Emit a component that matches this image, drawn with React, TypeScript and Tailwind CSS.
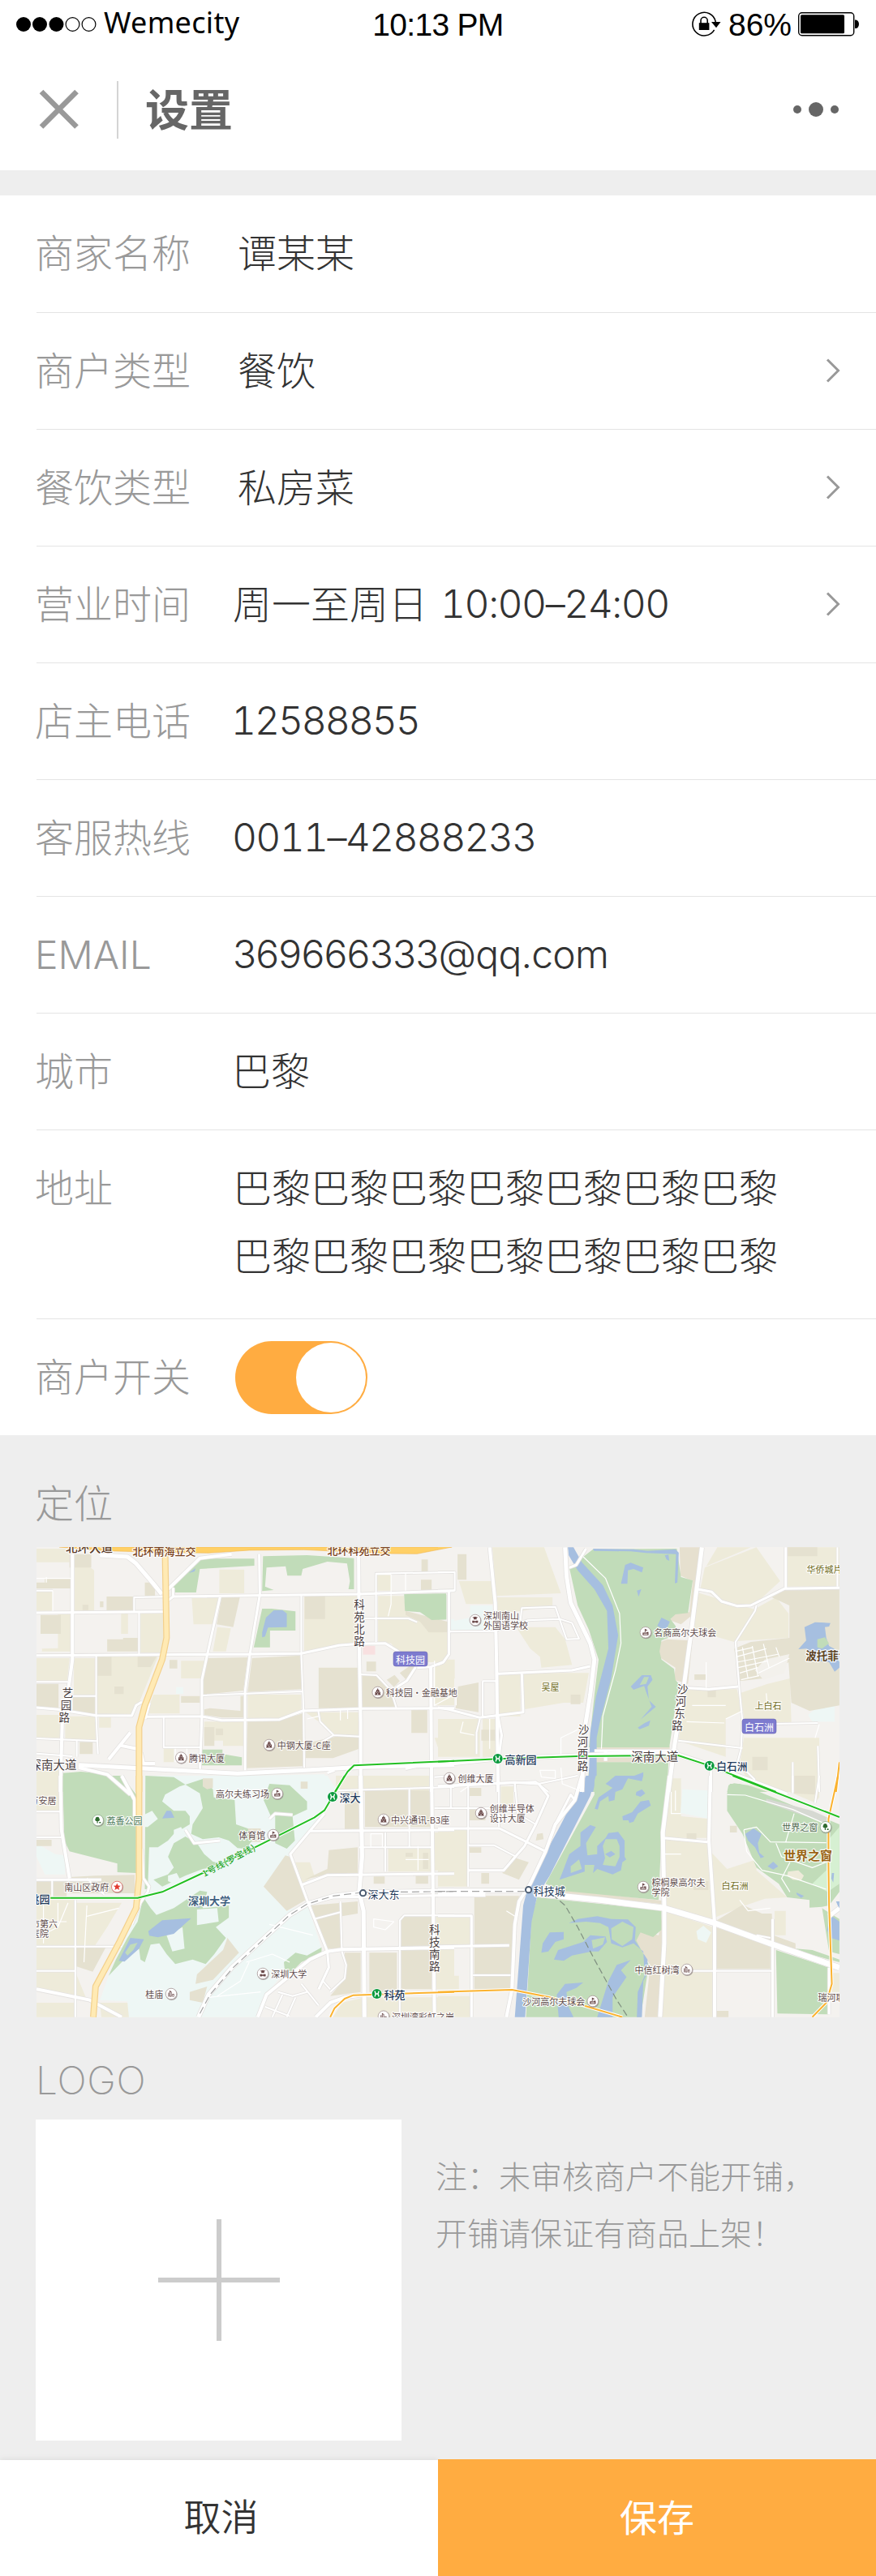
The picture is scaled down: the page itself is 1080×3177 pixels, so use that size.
import type { ReactNode } from "react";

const CJK = "font-['Inter','Noto_Sans_CJK_SC',sans-serif]";

/* ---------- status bar ---------- */

function StatusBar() {
  return (
    <div className="flex h-[60px] items-center justify-between bg-white font-normal text-black">
      <div className="flex w-[400px] items-center pl-5">
        <svg width="100" height="20" viewBox="0 0 100 20">
          <circle cx="9" cy="10" r="9" />
          <circle cx="29" cy="10" r="9" />
          <circle cx="49.5" cy="10" r="9" />
          <circle cx="69.5" cy="10" r="8.4" fill="none" stroke="#000" strokeWidth="1.2" />
          <circle cx="89.5" cy="10" r="8.4" fill="none" stroke="#000" strokeWidth="1.2" />
        </svg>
        <span className="ml-2 -mt-[5px] whitespace-nowrap font-['Noto_Sans','Open_Sans',sans-serif] text-[36px] leading-[44px] tracking-[0.3px]">
          Wemecity
        </span>
      </div>
      <div className="w-[280px] whitespace-nowrap pt-[2px] text-center font-['Liberation_Sans',Arial,sans-serif] text-[39px] leading-[44px] tracking-[-0.7px]">
        10:13 PM
      </div>
      <div className="flex w-[400px] items-center justify-end pr-5">
        <svg width="36" height="32" viewBox="0 0 36 32">
          <path d="M27.6 22.8A14.3 14.3 0 1 1 29.3 13" fill="none" stroke="#000" strokeWidth="1.6" />
          <path d="M24 13h11.5l-5.5 7.2z" />
          <rect x="8.8" y="14.2" width="12.6" height="8.8" />
          <path d="M11 15v-3.6a4.1 4.1 0 0 1 8.2 0V15" fill="none" stroke="#000" strokeWidth="1.6" />
        </svg>
        <span className="ml-[9px] mt-[2px] whitespace-nowrap font-['Liberation_Sans',Arial,sans-serif] text-[39px] leading-[44px] tracking-[0px]">
          86%
        </span>
        <svg className="ml-[8px]" width="76" height="30" viewBox="0 0 76 30">
          <rect x="0.7" y="0.7" width="68" height="28" rx="4" fill="none" stroke="#000" strokeWidth="1.4" />
          <rect x="3" y="3.3" width="54" height="23" rx="1.5" />
          <path d="M70 9.500h1a4 5.200 0 0 1 0 10.400h-1z" />
        </svg>
      </div>
    </div>
  );
}

function Header() {
  return (
    <header className="flex h-[150px] items-center bg-white pl-[48px] pr-[45px]">
      <svg className="shrink-0" width="50" height="50" viewBox="0 0 50 50">
        <path d="M3 3L46.500 46.500M46.500 3L3 46.500" stroke="#999" strokeWidth="6.600" />
      </svg>
      <div className="ml-[46px] h-[71px] w-[2px] bg-[#d4d4d4]" />
      <h1 className={`${CJK} ml-[33px] pt-[3px] text-[54px] font-semibold leading-none text-[#666]`}>设置</h1>
      <svg className="ml-auto" width="58" height="20" viewBox="0 0 58 20">
        <circle cx="6" cy="10" r="5" fill="#666" />
        <circle cx="29" cy="10" r="9" fill="#666" />
        <circle cx="52" cy="10" r="5" fill="#666" />
      </svg>
    </header>
  );
}

/* ---------- form rows ---------- */

function Chevron() {
  return (
    <svg className="ml-auto mr-[43px]" width="20" height="30" viewBox="0 0 20 30">
      <path d="M3 1.500L16.500 15L3 28.500" fill="none" stroke="#999" strokeWidth="3" />
    </svg>
  );
}

function Row({ label, last, arrow, height = "h-[144px]", children }: {
  label: string; last?: boolean; arrow?: boolean; height?: string; children: ReactNode;
}) {
  return (
    <div className={`ml-[45px] flex items-center ${height} ${last ? "" : "border-b border-[#e4e4e4] pb-px"}`}>
      <div className="-ml-[2px] w-[242px] shrink-0 whitespace-nowrap pt-px text-[#999]">{label}</div>
      {children}
      {arrow && <Chevron />}
    </div>
  );
}

/* ---------- map ---------- */

const PARK = "#c1dcb9";
const LIGHT = "#eeebda";
const DARK = "#e5e1d0";
const CAMPUS = "#eef7f5";
const WATER = "#a6bfe0";
const TAN = "#e6e0cf";

const tiles = [
  "matrix(0.35714 0 0 0.33333 -45 -18)",
  "matrix(0.34438 0 0 0.33333 495 -18)",
  "matrix(0.35714 0 0 0.33333 -45 282)",
  "matrix(0.34438 0 0 0.33333 495 282)",
];

const areas: [string, string][][] = [
  [
    [CAMPUS, "M610 905L1120 895L1130 930L1170 960H640Z M608 572H633V597H608Z M1555 320H1568V365H1555Z"],
    [LIGHT, "M126 60H240V110H126Z M252 80L325 140V290H252Z M126 215H182V290H126Z M485 300H565V445H485Z M126 465H240L232 550H126Z M255 465H330V600H255Z M335 460H545L480 630L455 675H335Z M126 675H210V760H126Z M225 680H330V770H225Z M757 137H843V225H757Z M662 242H755L735 340H668Z M750 350L797 355L780 440H735Z M625 475H712L700 540H625Z M530 600L620 600V670H505Z M855 600H1040V655L960 690H855Z M1050 235H1236V405L1050 440Z M1305 235H1395L1400 290L1530 370H1545V480H1400L1350 410L1305 405Z M1055 665H1240V750H1150L1100 700Z M705 700H840V770H705Z M1500 475H1568V640H1500Z M1500 760H1568V820L1520 820Z M126 880H205V960H126Z M1300 150H1350V215H1300Z M1160 900H1480V960H1160Z M200 300H245V440H145V430L200 428Z M418 300H442V375H418Z M342 680H383V722H342Z M565 800H600V850H565Z M770 755H840V790H770Z"],
    [DARK, "M240 80H315V130H240Z M155 170H245V207H126V185H155Z M368 237H460V288H368Z M500 185H535V235H500Z M140 305H210V375H140Z M370 395H425V390H480V440H370Z M765 240H828L805 350L748 340Z M712 465L855 462L840 585L700 600V545Z M870 465L1040 455V580L855 590Z M1100 500H1236V650H1100Z M1250 530H1300L1350 590L1370 645H1250Z M855 695L960 695L1045 670V865L850 872Z M1052 235H1122V320H1052Z M335 460H385V530H335Z M475 460H540L520 498H475Z M126 560H202V650H126Z M252 605H328V670H252Z M705 720H740V790H705Z M745 725H770V750H745Z M1400 290L1545 330V370H1480L1450 330L1400 305Z M1055 780L1160 755H1240V800L1150 835H1055Z M275 775H320V820H275Z M1265 478H1298V514H1265Z M1335 545L1362 527L1380 550L1360 572Z M1380 520L1420 490L1436 500L1405 548Z M1453 175H1490V213H1453Z M1455 100H1477V145H1455Z M625 605H690V630H625Z M1420 655H1475V742H1420Z M585 472H612V503H585Z M395 570H427V598H395Z M345 255H357V277H345Z M285 268H305V287H285Z M705 655L725 650L830 660V605H840V685H765L705 675Z"],
    ["#f8e0e0", "M1253 420H1295V452H1253Z"],
    [PARK, "M695 97H878V123L690 135L677 222H600V185L640 150Z M908 88L1060 84L1222 95V210H1203L1208 180L1198 115L1130 108L1045 135L1040 160H992L986 125L920 130L915 200L945 213L905 217Z M905 282H938L1020 292V363H932V425H876Z M1395 228L1540 226V322L1490 324L1450 295L1398 290Z M697 803H768V820L835 832V862H697Z M218 890L280 885L370 895L420 960H216Z M502 905L600 905L640 930L700 912L735 960H502Z M960 960L985 932L1015 945V960Z"],
    [DARK, "M695 915H735V945L715 950L700 940Z M1038 920H1062V948H1038Z"],
    [WATER, "M945 288L975 287L990 300V350L925 352L915 385L905 388V370L918 315Z M652 150L675 132L672 144Z"],
  ],
  [
    [CAMPUS, "M115 270H195V360H45V330L115 315Z M1325 675L1365 640L1420 625V700H1340Z M1255 168H1278V198H1252Z"],
    [LIGHT, "M195 55H380L440 225L207 235Z M210 240H410V270L300 290L210 300Z M280 350H420L455 395L480 490L370 500L365 460L330 430Z M215 525L295 520V680H215Z M307 520H540L520 630H450L307 655Z M75 180H205V265H100Z M10 470H60V540H10Z M0 690H150V830H0Z M160 690H210V830H160Z M955 130L1140 55L1225 180L1130 270H1060L1000 245L940 205Z M920 220L1135 285L1060 405L960 375L910 380Z M1250 55H1437V200H1250Z M890 580H1070L1090 660L1030 690V830L860 770Z M1080 595L1180 560L1260 540L1265 705L1100 710Z M1095 760H1365V960H1130L1080 860Z M1140 280L1210 240L1255 300V390L1070 402Z M1000 55H1120L960 125Z"],
    [DARK, "M1195 240L1250 208H1437V640L1330 660L1265 630L1255 480L1165 540L1080 550L1060 430L1120 405L1258 390V270Z M70 80H102V175H70Z M72 570L145 555V665L63 650Z M1252 55H1358V88H1252Z M918 525H958V545H918Z M965 585H995V610H965Z M155 730H205V770H155Z M475 600H510V635H475Z M0 330H35V365H0Z M1125 830H1180V880H1125Z"],
    ["#f3f1ec", "M1135 510L1170 470L1258 450L1240 520L1165 545Z"],
    [TAN, "M865 55H945L895 560L845 545L850 500L790 460L785 410L820 395L905 400V310L870 340L830 325L850 295L900 295L912 180L868 160Z M560 790H830L826 850H560Z"],
    [PARK, "M555 62L855 60L870 165L912 178L895 298L850 303L832 320L850 345L860 375L800 400L793 440L800 470L845 505L850 545L862 560L828 795L540 795L560 600L575 470L540 360L500 270L470 130L520 90Z M545 850H825L820 960H530Z M1040 935L1060 928L1110 935L1180 960H1035Z M0 230H30V322H0Z"],
    [WATER, "M465 55H485L515 110L590 195L625 270L645 380L620 540L580 700L568 760V900L555 960H520L540 900L545 740L565 610L610 430L605 290L560 210L500 140L468 85Z M555 60L700 62L750 68L850 62L862 75L857 185L848 188L852 80L745 76L690 70L558 68Z M655 190L670 120L690 112L735 130L730 148L700 135L680 140L678 190Z M712 215L728 210L718 238Z M785 345L800 315L830 330L815 365Z M690 570L730 528H762L768 545L750 570L755 620L780 645L725 692L765 645L745 590L738 568L700 582Z M715 722L740 705L760 695L755 715L722 728Z M595 955L625 940L625 900L690 905L735 887V910L690 915L650 930L655 960H600Z M1290 432L1318 400L1312 350L1350 332L1405 335L1400 348L1385 350L1390 390L1400 420L1437 440V500L1420 515L1400 480L1350 475L1320 430Z M812 85L825 82L828 105L818 100Z"],
    [PARK, "M1358 395L1385 388L1400 410L1375 430L1358 425Z M722 565L738 535L755 535L745 560Z"],
  ],
  [
    [CAMPUS, "M500 0H1130L1160 50L1110 140L1000 300L910 410L990 500L1060 470L1110 640L1000 700L920 810L890 893H440V835L345 830L375 740L440 580L500 440Z M126 250L190 290L225 295V365H155L126 300Z"],
    [LIGHT, "M126 0H205V130H126Z M126 460H255V630H126Z M262 470H420L370 560L290 690L262 630Z M126 635H260V720H126Z M126 725H260L300 830L126 790Z M126 840H255V893H126Z M345 840H440L445 893H350Z M1020 320H1070L1085 370L1045 400Z M1160 0H1240V50H1160Z M1260 0H1485V50H1260Z M1340 270H1490V355H1340Z M1500 210H1568V350H1500Z M1260 820H1568V893H1150L1180 840Z M1505 520H1568V790H1505Z"],
    [DARK, "M240 375L330 370L465 367V435H240Z M126 390H230V455H126Z M262 635H365L320 725L262 705Z M985 295L1002 300L1055 460L990 500L910 410Z M785 600L825 655L735 755L675 770L680 735L770 645Z M1190 50H1240V200H1190Z M1260 55H1410V190H1260Z M1415 55H1490V190H1415Z M1135 275L1235 265V365H1130L1050 385L1130 345Z M1075 480L1235 465V510L1180 520V640H1120Z M1275 655H1370V800H1275Z M1385 520H1490V790H1385Z M1190 655H1245V800L1140 815L1190 750Z M655 800L715 780L700 840L655 830Z M126 237H178V260H126Z M1290 373H1328V400H1290Z M1435 370H1478V400H1435Z M1400 285H1425V300H1400Z M1460 285H1478V345H1460Z M845 195H900V245H845Z"],
    [PARK, "M216 0H420L470 70V360L405 357V325L240 280L222 240Z M502 0L600 5L640 33L620 40L570 70L560 95L600 130L640 130L655 150L655 180L600 215L580 240L545 265L515 265L510 420H500Z M640 33L700 12L735 50L738 80L810 90L815 180L855 195L870 240L850 270L820 268L790 240L755 228L700 235L660 215L665 180L700 120L690 65Z M640 225L680 250L705 290L735 318L790 330L700 345L640 370L560 410L530 385L580 365L600 340L580 300L600 250Z M910 90L930 30L1000 35L1060 95V125L1010 150H935Z M950 150H1010L1018 240L990 270L950 250Z M495 450L520 490L540 515L600 490L690 425L715 430L700 490L790 480L790 525L745 560L780 600L740 660L710 697L665 680L605 697L575 660L550 620L520 625L500 690L485 680L480 640L420 690L375 740L400 680L440 600L475 540Z M980 690L1020 655L1060 665L1110 635V655L1040 690L930 810L918 808L985 740Z"],
    [CAMPUS, "M575 590L630 560L637 640L595 650Z M680 495L750 490L755 540L680 553Z M580 370L610 360L622 385L600 400L580 390Z M600 200L625 190L635 210L600 228Z M497 145L525 130L545 160L510 190H497Z"],
    [DARK, "M700 10H735V45L715 50L700 40Z M1038 22H1062V48H1038Z"],
    [WATER, "M560 158L575 130L590 130L602 155Z M512 575L560 535L660 527L600 585L545 598L515 592Z M410 685L450 600L497 605L480 640L430 688Z M668 482L690 480L688 490Z"],
    [PARK, "M432 655L450 625L475 618L460 645L440 665Z"],
  ],
  [
    [LIGHT, "M0 200H105V410H0Z M0 520H120V630H0Z M810 230L965 245L985 540L815 490Z M810 500L985 560V893H800Z M835 10H870V150L970 160V230H805Z M975 280L1035 345L1140 310V350L1250 450L1170 455L1100 480L990 525Z M0 815H125V893H0Z M1205 500H1245V590H1205Z M0 740H75V790H0Z M1130 0H1365V80L1350 100L1270 65L1130 0Z M225 40H270V110H225Z M1410 730H1437V800H1410Z"],
    [DARK, "M1090 478L1160 510L1195 510L1200 625L990 540Z M992 560L1190 625V715H992Z M125 445H290L265 790H130V450Z M265 300L325 320L290 385L230 360Z M110 120H170V165H110Z M1270 0H1350V70L1270 65Z M155 360H183V400H155Z M110 265H155V285H110Z M890 213H925V235H890Z M915 390H968V423H915Z M355 215L375 212L378 235L350 240Z M1200 590L1280 620V642L1205 620Z M997 870H1040V893H997Z M1045 185H1070V210H1045Z M110 45H155V75H110Z"],
    [CAMPUS, "M875 50L968 55L965 158L868 138Z M925 575L950 555L978 580L960 618L930 605Z"],
    [TAN, "M720 575L790 590L805 500V893H740L760 700L705 620Z M440 420L800 462V475L440 435Z"],
    [PARK, "M560 0H820L800 210L790 460L440 425L385 400L560 70Z M355 450L800 498V570L770 597L725 580L710 610L755 700L725 893H315L335 520Z M1035 65L1045 30L1080 30L1437 180V430L1400 480L1375 485L1330 488V460L1250 450L1220 400L1140 340L1090 215L1035 130Z M1210 645L1400 710V883L1215 880Z M1375 490L1437 530V660L1400 650Z M1280 640L1340 645L1437 680V690L1330 660Z"],
    ["#d6f0d2", "M1395 240L1437 190V400L1395 430L1340 400L1390 350Z"],
    ["#d6d9d2", "M1175 85L1340 130L1395 155V178L1330 155L1175 100Z"],
    [LIGHT, "M1253 355L1290 350L1310 370L1300 388L1270 385L1250 370Z"],
    [WATER, "M530 0H565L545 75L400 370L355 445L335 540L312 893H275L290 690L305 480L325 400L430 200Z M561 122L575 80L625 45L600 30L635 0H735L730 20L680 10L660 50L635 60L632 90L612 95L610 75L580 95L572 125Z M710 60L730 50L742 65L725 78L708 72Z M660 150L695 135L725 95L755 90L762 110L715 140L700 170L685 175L682 165L662 165Z M435 385L450 345L470 290L510 260V210L545 182L565 190L530 250L535 295L570 290L570 260L600 230L610 212L645 208L668 240V300L674 310L660 320L655 350L625 365L570 345L555 360L560 330L525 330V355L480 370Z M1100 215L1130 195L1158 215L1145 250L1150 285L1168 300L1155 305L1135 265L1110 240Z M1180 335L1200 318L1218 335L1200 347Z M468 545L500 530L570 520L620 530L680 532L708 560L705 610L750 680V730L735 760L730 893H712L715 800L740 740L735 650L700 620L660 635L620 620L610 560L580 545L530 540Z M370 655L375 620L400 580L450 578V605L420 615L395 650Z M415 680L430 645L520 615L545 590L600 595L605 615L575 650L550 650L480 665L450 685Z M570 893L610 760L640 700L690 682L655 720L675 745L625 820V893Z M425 810L455 770L520 765L495 785L460 800L465 850L485 893H432Z M1405 515L1437 540V610L1405 600L1393 570Z M1425 465H1437V495Z M1410 360H1418L1415 395L1408 380Z M1283 432L1310 445L1300 452L1285 440Z"],
    [PARK, "M590 260L600 235H640L650 260V300L635 335L590 330L598 305Z M475 335L505 310L515 345L475 360Z M620 565L660 540L700 560L695 605L660 630L622 605Z M550 608L598 598L590 625L555 640Z"],
    [WATER, "M598 290L620 278L635 290L615 302Z"],
  ],
];

const roads: [number, string][][] = [
  [
    [1.2, "M126 170H245M182 215V290M160 165V185M1350 155V265L1340 310M1300 155H1350M1400 150V215M605 850V800M645 850V800M1060 690L1100 680M1175 655V695M1500 475V640L1568 600M1200 655V690"],
    [2, "M126 215H182M463 292V240L565 238M480 297V455M332 455V680L338 820M126 553H235M250 605H332M126 762L335 772M126 818L250 828M265 772V830M1040 230V450L1048 660L1050 870M697 603L1043 588M1298 405V152L1568 147M1250 318H1410L1440 332M1245 525L1300 528L1350 585L1368 648M1098 655L1105 700L1152 750L1245 755M1152 750L1110 775M565 685V795H690M1500 905L1568 900"],
    [3, "M126 297L565 293M126 455L550 452L860 450L1040 448L1170 418L1240 412L1330 410L1375 440L1400 460M600 237L1240 228L1568 215M126 648L200 655L330 677L455 678L470 640L490 627M598 205V237L580 252M760 237L715 455L697 545V680L690 875M895 80L897 230L862 455L846 590V880M500 682L695 680L765 695L965 692L1045 660L1245 652L1568 650M1550 215V450L1530 480L1487 497L1440 500M1435 498L1405 548L1370 572M1400 875L1440 865M1130 890L1155 880"],
    [4, "M250 80V470L240 550L215 700L208 960M580 210L690 95L800 80M1238 80L1240 420L1245 700V960M1487 497L1490 960M272 870L370 895L450 970M450 740L375 840M415 788L480 802M487 815L495 855H535M515 630L500 690"],
    [5, "M345 84L440 90L470 115L530 190L558 228M272 860L480 872L820 892L1050 880L1245 868L1568 860"],
  ],
  [
    [1.2, "M520 90L600 170L650 300L655 410L635 510L590 680L585 800M1065 440L1128 425M1068 460L1175 430M1070 480L1220 450M1075 500L1180 475M1080 520L1145 500M1085 545L1150 530M1090 425L1110 540M1125 420L1145 530M1165 412L1185 500M1210 425L1222 460M1148 520L1258 465M1090 660L1030 690M910 640H1030M890 700L1025 705M1365 710L1350 760M65 590V640M90 700L80 740L130 750M185 690V800M440 820V760L500 730M440 870L445 930L520 960M960 480V575M365 880H420V910L370 905ZM1175 595L1180 650"],
    [2, "M0 147H60V215H0M40 215V450L20 480L0 490M40 367L200 365L320 325L435 320L480 335L505 393L460 395L435 320L420 275L300 280L295 325M160 550H208M160 550V680M1140 270L1135 290L1065 405L1080 590L1090 700L1085 800L1070 860M860 770L1090 798M150 690L138 740V820M1430 55V200M1270 850V960M1360 790L1365 960M1090 710L1360 705M275 930V960M0 942L215 930L350 922L395 960M1100 880L1135 915"],
    [3, "M215 523L480 510L545 495M300 520L305 665L150 685L40 655L0 648M930 210L980 220L1015 255L1070 272L1120 270L1240 208L1437 205M1245 55V205M895 575L970 580L1075 570M215 680L228 750L218 830M977 870V960M470 130L495 120L530 60M560 808H860"],
    [4, "M185 55L205 260L210 500L215 960M600 805V845"],
    [5, "M455 55L460 160L475 260L545 410L560 470L545 600L520 760V830L515 960M945 55L905 380L880 570L845 800L825 960M0 860L200 838L500 825L700 817L860 822L970 860L1250 970"],
  ],
  [
    [1.2, "M150 470V620M200 470V560L126 600M235 470L200 560M126 540H230M300 480L290 690M410 490L300 520M930 550L1080 590M850 690L940 660L1000 690M860 690L830 760L750 815M720 820L900 800M1280 215H1320V265H1280ZM1443 260V350M1400 310H1480M1290 530L1360 540L1330 570L1290 560Z"],
    [2, "M126 133H208M126 228H212M260 460V893M126 722H260M126 632H420M1160 55L1568 42M1413 50V265M1330 210V355M1240 265H1490M1085 530L1175 505M1175 465L1180 640M1380 893V535L1395 517H1568M915 855L1000 890M960 800L1010 815L1060 800M1040 770L1100 850M1115 760L1140 790M1180 650L1195 700L1190 750L1140 800M975 810L940 893M1020 820L990 893M1500 120H1568M180 385V455M360 440L300 380"],
    [3, "M126 385H350M490 270L495 380L515 410L510 430L485 470L455 550M1120 140L1002 290L1060 460L1130 650L1135 710L1100 790M1065 205L1568 200M1040 405L1130 368L1568 362M1060 470L1150 450L1568 442M930 160L950 140L1010 145M640 200L670 250L760 240"],
    [4, "M208 0L212 200L240 380M420 0L465 90V150M126 790L310 830L420 893M1490 0L1500 893M890 893L920 810L1000 740L1070 680L1130 650L1180 643L1568 635M1090 893L1140 840L1190 820L1258 810"],
    [5, "M1245 0L1250 300L1240 430L1255 500L1258 893M685 893L720 810L800 710L1000 515L1060 475L1150 445L1250 432L1568 425"],
  ],
  [
    [1.2, "M1035 70L1100 72L1270 125L1380 175M1095 200L1140 190L1190 245L1390 248M1095 200L1105 280L1160 350L1250 370L1390 420M1275 140L1245 245M1210 250L1230 300L1340 340L1390 320M1260 320L1230 380L1260 430M850 55V130M810 290H870M835 60V140H870M1080 460L1110 500L1190 490M245 500L275 520M165 0L80 60"],
    [2, "M46 40V120M0 120H215M105 257H200L280 300M125 738H260M900 722H1200M1140 590L1190 600M1350 100L1365 0M1270 0V65M218 0V190M108 0V410M275 25L285 140L350 180M360 30L500 0"],
    [3, "M805 230L965 245M0 195H220L385 280M0 38L275 25L360 30L395 75L350 180L310 260L235 350H108M0 518H120V893M0 632L255 628M1198 530V893M1400 710V883M490 90L475 70L420 180"],
    [4, "M515 0L490 90L420 180L385 280L330 400L290 465L275 550L265 790L245 893M975 0L970 240L990 540V893"],
    [5, "M830 0L805 210L810 480V620L795 893M0 425H320M0 440L170 440M1437 490L1400 520"],
    [7, "M345 435L580 460L810 490L990 545L1200 625L1437 710"],
  ],
];

const trunk = ["M570 80L575 390L560 470L500 640L480 720V960", "", "M480 0V380L470 490L410 620L330 780L322 893", ""];
const greenLine = [
  "M1156 960L1200 885L1222 862L1568 845",
  "M0 848L215 838L500 828L860 825L970 862L1210 960",
  "M174 452H475L560 430L700 360L880 265L1085 155L1120 128L1190 0",
  "M1055 0L1437 153",
];
const orangeLine = [
  "",
  "M1437 850L1425 960",
  "M1140 893L1155 860L1190 825L1220 812L1568 800",
  "M0 800L265 792L400 820L520 850L660 893M1432 0L1398 160V330L1400 480L1410 770L1390 840L1340 893",
];
const railDash = ["", "", "M690 880L725 810L805 710L1000 515L1060 475L1150 445L1250 432L1568 428", "M0 428H310"];
const plannedDash = ["", "", "", "M410 440L455 480L500 560L560 680L640 830L680 893"];

function TileLayer({ paths, color, width, dash }: { paths: string[]; color: string; width: number; dash?: string }) {
  return (
    <>
      {paths.map((d, i) => d && (
        <g key={i} transform={tiles[i]}>
          <path d={d} fill="none" stroke={color} strokeWidth={width} strokeDasharray={dash} strokeLinejoin="round" vectorEffect="non-scaling-stroke" />
        </g>
      ))}
    </>
  );
}

type Label = [text: string, x: number, y: number, size: number, color: string, weight?: number];

const POI = "#5f4c4c";
const OLIVE = "#6f6b20";
const ROAD = "#4a4040";
const METRO = "#1f3a5a";

const labels: Label[] = [
  ["北环大道", 36, -1, 14.5, "#5a3a28", 500],
  ["北环南海立交", 118.6, 4.7, 13, "#7a4320", 500],
  ["北环科苑立交", 358.6, 3.6, 13, "#7a4320", 500],
  ["科技园·金融基地", 430.7, 179, 11, POI],
  ["中钢大厦-C座", 296.8, 244, 11, POI],
  ["腾讯大厦", 187.9, 259.7, 11, POI],
  ["深南大道", -8.5, 267.7, 14.5, ROAD],
  ["吴屋", 622.4, 171.7, 11, OLIVE],
  ["深圳南山", 551.1, 83.7, 11, POI],
  ["外国语学校", 551.1, 95.7, 11, POI],
  ["名商高尔夫球会", 761.2, 105, 11, POI],
  ["华侨城片区", 949.6, 26.7, 11, OLIVE],
  ["波托菲诺", 948.2, 133, 13.5, "#5f4526", 700],
  ["上白石", 885.5, 194.7, 11, OLIVE],
  ["高新园", 577.6, 261, 13, METRO, 500],
  ["深南大道", 733.3, 257.7, 14.5, ROAD],
  ["白石洲", 838.3, 269.7, 12.7, METRO, 500],
  ["创维大厦", 519.4, 285, 11, POI],
  ["万安居", -8.5, 312, 11, POI],
  ["荔香公园", 86.4, 337, 11, "#4d7a5b"],
  ["高尔夫练习场", 221, 304, 11, POI],
  ["体育馆", 249.3, 355, 11, POI],
  ["深大", 373.6, 308, 13, METRO, 500],
  ["中兴通讯-B3座", 437, 336, 11, POI],
  ["南山区政府", 34.3, 419, 11, POI],
  ["桃园", -9.5, 433, 13, METRO, 500],
  ["深圳大学", 187, 435, 13, "#3f5f80", 700],
  ["深大东", 408.6, 427, 13, METRO],
  ["市第六", -7, 463.7, 11, POI],
  ["医院", -7, 475.7, 11, POI],
  ["深圳大学", 289.3, 526, 11, POI],
  ["桂庙", 134.3, 551, 11, POI],
  ["科苑", 428.6, 551, 13, METRO, 500],
  ["深圳湾彩虹之岸", 437.9, 579, 11, POI],
  ["创维半导体", 558.7, 322, 11, POI],
  ["设计大厦", 558.7, 333.7, 11, POI],
  ["世界之窗", 919.3, 345.3, 11, "#4f6a50"],
  ["世界之窗", 921, 379.7, 15, "#9a6414", 700],
  ["科技城", 612.8, 423, 13, METRO],
  ["棕榈泉高尔夫", 758.4, 412.7, 11, POI],
  ["学院", 758.4, 424.7, 11, POI],
  ["白石洲", 844.5, 417, 11, OLIVE],
  ["中信红树湾", 737.4, 521, 11, POI],
  ["沙河高尔夫球会", 599.3, 560, 11, POI],
  ["瑞河耶纳", 963.4, 554.7, 11, POI],
];

/* street names that run downwards, one glyph per point */
const streets: [string, number, number][][] = [
  [["科", 398, 70.3], ["苑", 398, 85.3], ["北", 398, 100.3], ["路", 398, 115.3]],
  [["艺", 38.6, 178.7], ["园", 36.4, 193.7], ["路", 34.3, 208.7]],
  [["沙", 796.7, 174.3], ["河", 794.6, 189.3], ["东", 792.9, 204.3], ["路", 790, 219.3]],
  [["沙", 674.8, 223.7], ["河", 673.4, 239], ["西", 673.4, 254], ["路", 673.4, 269]],
  [["科", 490.7, 470.7], ["技", 490.7, 485.7], ["南", 490.7, 500.7], ["路", 490.7, 515.7]],
];

type PinKind = "tower" | "golf" | "school" | "flats" | "tree" | "gov";
const pins: [PinKind, number, number][] = [
  ["tower", 420.7, 179], ["tower", 286.8, 244], ["tower", 178.2, 259.7], ["school", 540.8, 90],
  ["golf", 750.9, 105.3], ["tower", 509, 285], ["tree", 75.7, 337], ["golf", 296.8, 304],
  ["golf", 291.8, 355], ["tower", 427.9, 336], ["gov", 99.3, 419], ["school", 279, 526],
  ["flats", 166, 551], ["flats", 427.9, 578.7], ["tower", 548, 328], ["tree", 973, 345.3],
  ["golf", 748, 419], ["flats", 801.8, 521], ["golf", 685.8, 560],
];

const glyphs: Record<PinKind, [string, string]> = {
  tower: ["M-3.8 3.6V2.8H-3.2V-0.5H-1.8V-3H-0.6V-4.5H0.6V-3H1.8V-0.5H3.2V2.8H3.8V3.6ZM-0.5 3V1.5H0.5V3ZM-1.8 0.8H-1V0H-1.8ZM1 0.8H1.8V0H1ZM-0.4 -0.6H0.4V-1.6H-0.4Z", "#6b4a4a"],
  golf: ["M-1 -4.5L2.6 -2.8L-0.2 -1.8V0.8H0.8V-0.6H3.6V3.5H-3.6V0.2H-1ZM-2.4 1.4V2.4H2.4V1.4Z", "#6b4a4a"],
  school: ["M-3.6 -3.2L0 -4.2L3.6 -3.2L1.8 -2.4V-0.8H-1.8V-2.4ZM-3.6 0.8H-1.2L0 1.5L1.2 0.8H3.6V3.4H1L0 2.6L-1 3.4H-3.6Z", "#6b4a4a"],
  flats: ["M-3.6 3.6V-1.5H-2.6V3.6ZM-2 3.6V-4.2L0.6 -2.5V3.6ZM-1.2 2.8H-0.2V-2L-1.2 -2.6ZM1.4 3.6V0H3.6V3.6ZM2.1 2.9H2.9V0.7H2.1Z", "#6b4a4a"],
  tree: ["M-0.6 -4.2A2.4 2.4 0 0 1 1.8 -2A1.9 1.9 0 0 1 1 1H0V3.6H-1.2V1H-2.2A1.9 1.9 0 0 1 -3 -2A2.4 2.4 0 0 1 -0.6 -4.2ZM1.6 2H3.6V3.6H1.6Z", "#2f6b2f"],
  gov: ["M0 -4.6L1.3 -1.5L4.5 -1.3L2 0.8L2.9 4L0 2.2L-2.9 4L-2 0.8L-4.5 -1.3L-1.3 -1.5Z", "#e23a30"],
};

const metroStops: [number, number][] = [[568.7, 261], [829.7, 269.7], [365, 308], [419.6, 551]];
const railStops: [number, number][] = [[402.5, 426.7], [606.6, 422.7]];
const districts: [string, number, number][] = [["科技园", 440, 129], ["白石洲", 870, 212]];

function CityMap() {
  return (
    <svg className="block overflow-hidden font-['Noto_Sans_CJK_SC',sans-serif] font-normal" width="990" height="580" viewBox="0 0 990 580">
      <rect width="990" height="580" fill="#f4f2ef" />
      {areas.map((list, i) => (
        <g key={i} transform={tiles[i]}>
          {list.map(([fill, d], k) => <path key={k} d={d} fill={fill} />)}
        </g>
      ))}
      {["#e4e2e0", "#ffffff"].map((stroke, pass) => (
        <g key={stroke}>
          {roads.map((list, i) => (
            <g key={i} transform={tiles[i]} fill="none" strokeLinejoin="round">
              {list.map(([w, d], k) => (
                <path key={k} d={d} stroke={stroke} strokeWidth={pass === 0 ? (w > 1.5 ? w + 1.6 : 0) : w} vectorEffect="non-scaling-stroke" />
              ))}
            </g>
          ))}
        </g>
      ))}
      <TileLayer paths={trunk} color="#f3d08c" width={8} />
      <TileLayer paths={trunk} color="#ffeab4" width={5.6} />
      <g transform={tiles[0]}>
        <path d="M205 54H1560L1440 79L1330 78L1050 64L860 66L720 76L540 73L370 68Z" fill="#ffd066" stroke="#f0b040" strokeWidth="1.500" />
      </g>
      <path d="M495 2.500L511 0H495Z" fill="#ffd066" />
      <TileLayer paths={railDash} color="#a5a5a5" width={1.2} dash="9 5" />
      <TileLayer paths={plannedDash} color="#7f8f80" width={1.2} dash="8 4" />
      <TileLayer paths={orangeLine} color="#fff" width={4} />
      <TileLayer paths={orangeLine} color="#fbb22e" width={2} />
      <TileLayer paths={greenLine} color="#fff" width={4} />
      <TileLayer paths={greenLine} color="#22bf22" width={2} />

      <text transform="translate(205 403) rotate(-28)" fontSize="10.5" fontWeight="500" fill="#1ea51e" stroke="#eef7f5" strokeWidth="1.6" paintOrder="stroke" dominantBaseline="central" textLength="72">
        1号线(罗宝线)
      </text>

      {pins.map(([kind, x, y], i) => (
        <g key={i} transform={`translate(${x} ${y})`}>
          <circle cx="0.6" cy="0.8" r="7.2" fill="#8f8585" opacity="0.7" />
          <circle r="6.8" fill="#fff" stroke={kind === "gov" ? "#e26a60" : kind === "tree" ? "#8fb08f" : "#a99a9a"} strokeWidth="0.8" />
          <path d={glyphs[kind][0]} fill={glyphs[kind][1]} fillRule="evenodd" />
        </g>
      ))}
      {metroStops.map(([x, y]) => (
        <g key={x} transform={`translate(${x} ${y})`}>
          <circle r="6.8" fill="#fff" />
          <circle r="6" fill="#0c9a3f" />
          <path d="M-2.6 -3.5Q-0.6 0 -2.6 3.5M2.6 -3.5Q0.6 0 2.6 3.5M-1.5 0H1.5" stroke="#fff" strokeWidth="1.3" fill="none" />
        </g>
      ))}
      {railStops.map(([x, y]) => (
        <circle key={x} cx={x} cy={y} r="3.6" fill="#fff" stroke="#4a5a70" strokeWidth="2" />
      ))}
      {districts.map(([name, x, y]) => (
        <g key={name}>
          <rect x={x} y={y} width="42" height="18" rx="3" fill="#7d7bcf" stroke="#5c5aa8" strokeWidth="0.5" />
          <text x={x + 21} y={y + 9} fontSize="12" fill="#fff" textAnchor="middle" dominantBaseline="central">{name}</text>
        </g>
      ))}
      <g stroke="#fff" strokeWidth="2.4" strokeLinejoin="round" paintOrder="stroke" strokeOpacity="0.85">
        {labels.map(([text, x, y, size, color, weight], i) => (
          <text key={i} x={x} y={y} fontSize={size} fill={color} fontWeight={weight ?? 400} dominantBaseline="central">{text}</text>
        ))}
        {streets.map((chars) => chars.map(([c, x, y]) => (
          <text key={`${x}-${y}`} x={x} y={y} fontSize="13.5" fill={ROAD} textAnchor="middle" dominantBaseline="central">{c}</text>
        )))}
      </g>
    </svg>
  );
}

/* ---------- page ---------- */

export default function App() {
  return (
    <div className={`${CJK} flex h-[3177px] w-[1080px] flex-col overflow-hidden bg-[#eeeeee] text-[48px] font-light leading-[70px] text-[#333]`}>
      <StatusBar />
      <Header />
      <main className="mt-[31px] bg-white">
        <Row label="商家名称" height="h-[145px]"><span className="ml-[8px] pt-px">谭某某</span></Row>
        <Row label="商户类型" arrow><span className="ml-[8px] pt-px">餐饮</span></Row>
        <Row label="餐饮类型" arrow><span className="ml-[8px] pt-px">私房菜</span></Row>
        <Row label="营业时间" arrow>
          <span className="ml-[2px] whitespace-nowrap pt-px">周一至周日</span>
          <span className="ml-[16px] whitespace-nowrap font-[280] tabular-nums tracking-[-1.5px]">10:00–24:00</span>
        </Row>
        <Row label="店主电话"><span className="font-[280] tabular-nums tracking-[-2.1px]">12588855</span></Row>
        <Row label="客服热线"><span className="ml-px font-[280] tabular-nums tracking-[-1.7px]">0011–42888233</span></Row>
        <Row label="EMAIL"><span className="ml-[2px] font-[280] tracking-[-0.8px]">369666333@qq.com</span></Row>
        <Row label="城市"><span className="ml-px pt-px">巴黎</span></Row>
        <div className="ml-[45px] flex h-[233px] border-b border-[#e4e4e4] pt-[30px] leading-[84px]">
          <div className="-ml-[2px] w-[244px] shrink-0 text-[#999]">地址</div>
          <p className="whitespace-nowrap">
            巴黎巴黎巴黎巴黎巴黎巴黎巴黎
            <br />
            巴黎巴黎巴黎巴黎巴黎巴黎巴黎
          </p>
        </div>
        <Row label="商户开关" last height="h-[143px]">
          <div className="ml-[5px] flex h-[90px] w-[163px] items-center justify-end rounded-full bg-[#ffac41] p-[2px]">
            <div className="size-[86px] rounded-full bg-white" />
          </div>
        </Row>
      </main>

      <section className="pl-[45px]">
        <h2 className="-ml-[2px] flex h-[138px] items-center pt-[31px] text-[#999]">定位</h2>
        <CityMap />
      </section>

      <section className="pl-[44px]">
        <h2 className="flex h-[126px] items-center pt-[30px] font-[250] tracking-[0.7px] text-[#999]">LOGO</h2>
        <div className="flex">
          <div className="flex h-[396px] w-[451px] items-center justify-center bg-white">
            <svg width="150" height="150" viewBox="0 0 150 150">
              <path d="M75 0V150M0 75H150" stroke="#ccc" strokeWidth="6" />
            </svg>
          </div>
          <p className="ml-[42px] mt-[36px] whitespace-nowrap text-[39px] leading-[70px] text-[#999]">
            注：未审核商户不能开铺，
            <br />
            开铺请保证有商品上架！
          </p>
        </div>
      </section>

      <footer className="mt-auto flex h-[144px] text-[46px]">
        <button className="mt-px flex w-[540px] items-center justify-center bg-white pb-[4px] pl-[5px] font-[350] text-[#333] shadow-[0_-2px_6px_rgba(0,0,0,0.06)]">取消</button>
        <button className="relative flex w-[540px] items-center justify-center bg-[#ffac41] font-normal text-white">保存</button>
      </footer>
    </div>
  );
}
